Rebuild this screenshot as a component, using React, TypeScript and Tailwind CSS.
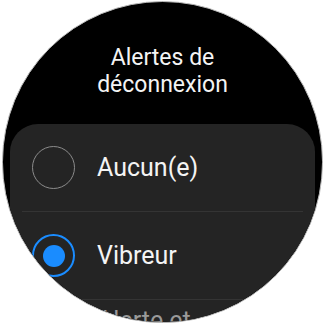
import React, { useState } from "react";

type Option = {
  id: string;
  label: string;
};

const OPTIONS: Option[] = [
  { id: "none", label: "Aucun(e)" },
  { id: "vibrate", label: "Vibreur" },
  { id: "both", label: "Alerte et vibreur" },
];

const Radio: React.FC<{ checked: boolean }> = ({ checked }) =>
  checked ? (
    <span className="flex h-[43px] w-[43px] shrink-0 items-center justify-center rounded-full border-2 border-[#1a8cff]">
      <span className="h-[22px] w-[22px] rounded-full bg-[#1a8cff]" />
    </span>
  ) : (
    <span className="h-[43px] w-[43px] shrink-0 rounded-full border-[1.5px] border-[#8c8c8c]" />
  );

const App: React.FC = () => {
  const [selected, setSelected] = useState<string>("vibrate");

  return (
    <div
      className="flex h-[325px] w-[325px] items-start bg-white pl-[2px] pt-[1px]"
      style={{ fontFamily: "Roboto, 'Liberation Sans', sans-serif" }}
    >
      <div className="h-[322px] w-[321px] overflow-hidden rounded-full border-[1.5px] border-[#bcbcbc] bg-black">
        <h1 className="pt-[42px] text-center text-[23px] leading-[27px] font-normal text-[#f4f4f4]">
          Alertes de
          <br />
          déconnexion
        </h1>

        <ul className="mx-[7px] mt-[26px] rounded-[28px] bg-[#242424]">
          {OPTIONS.map((o, i) => (
            <li key={o.id}>
              {i > 0 && <div className="mx-[12px] h-px bg-[#343434]" />}
              <button
                onClick={() => setSelected(o.id)}
                className="flex h-[87px] w-full items-center gap-[22px] pl-[22px] text-left"
              >
                <Radio checked={selected === o.id} />
                {i === 2 ? (
                  <span className="mt-[6px] w-[130px] self-start text-[25px] leading-[30px] text-[#9a9a9a]">
                    {o.label}
                  </span>
                ) : (
                  <span className="text-[25px] leading-[30px] text-[#f4f4f4]">{o.label}</span>
                )}
              </button>
            </li>
          ))}
        </ul>
      </div>
    </div>
  );
};

export default App;
